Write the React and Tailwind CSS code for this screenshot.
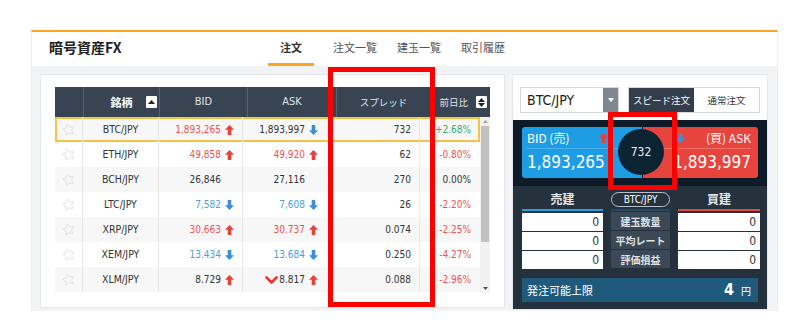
import React from 'react';
import { Star } from 'lucide-react';

const NUM = "[font-family:'DejaVu_Sans_Condensed','DejaVu_Sans','Noto_Sans_CJK_JP',sans-serif]";
const JP = "[font-family:'Noto_Sans_CJK_JP',sans-serif]";

const colorOf = {
  red: 'text-[#ef5350]',
  blue: 'text-[#4a9ee0]',
  green: 'text-[#3aa76d]',
  dark: 'text-[#333333]',
};

const rows = [
  { sym: 'BTC/JPY', bid: '1,893,265', bidC: 'red', bidA: 'up', ask: '1,893,997', askC: 'dark', askA: 'down', spread: '732', chg: '+2.68%', chgC: 'green' },
  { sym: 'ETH/JPY', bid: '49,858', bidC: 'red', bidA: 'up', ask: '49,920', askC: 'red', askA: 'up', spread: '62', chg: '-0.80%', chgC: 'red' },
  { sym: 'BCH/JPY', bid: '26,846', bidC: 'dark', bidA: null, ask: '27,116', askC: 'dark', askA: null, spread: '270', chg: '0.00%', chgC: 'dark' },
  { sym: 'LTC/JPY', bid: '7,582', bidC: 'blue', bidA: 'down', ask: '7,608', askC: 'blue', askA: 'down', spread: '26', chg: '-2.20%', chgC: 'red' },
  { sym: 'XRP/JPY', bid: '30.663', bidC: 'red', bidA: 'up', ask: '30.737', askC: 'red', askA: 'up', spread: '0.074', chg: '-2.25%', chgC: 'red' },
  { sym: 'XEM/JPY', bid: '13.434', bidC: 'blue', bidA: 'down', ask: '13.684', askC: 'blue', askA: 'down', spread: '0.250', chg: '-4.27%', chgC: 'red' },
  { sym: 'XLM/JPY', bid: '8.729', bidC: 'dark', bidA: 'up', ask: '8.817', askC: 'dark', askA: 'up', spread: '0.088', chg: '-2.96%', chgC: 'red', chevron: true },
];

function Arrow({ dir }) {
  if (!dir) return <span className="w-[9px]" />;
  const up = dir === 'up';
  return (
    <svg width="9" height="10" viewBox="0 0 9 10" className={up ? 'text-[#e8403a]' : 'text-[#3b8fd9]'}>
      {up ? (
        <path d="M4.5 0 9 4.8H6.3V10H2.7V4.8H0Z" fill="currentColor" />
      ) : (
        <path d="M4.5 10 9 5.2H6.3V0H2.7V5.2H0Z" fill="currentColor" />
      )}
    </svg>
  );
}

function SortIcon({ both }) {
  return (
    <span className="w-[11px] h-[12px] bg-white rounded-[1px] flex flex-col items-center justify-center gap-[1px]">
      <svg width="7" height="4" viewBox="0 0 7 4"><path d="M3.5 0 7 4H0Z" fill="#222" /></svg>
      {both && <svg width="7" height="4" viewBox="0 0 7 4"><path d="M3.5 4 7 0H0Z" fill="#222" /></svg>}
    </span>
  );
}

function Table() {
  return (
    <div className="w-[435px]">
      {/* header */}
      <div className={`grid grid-cols-[29px_76px_88px_89px_94px_59px] h-[30px] bg-[#394453] text-[#dfe4ea] text-[11px] ${NUM}`}>
        <div className="border-r border-[#56606e]" />
        <div className="relative flex items-center justify-center border-r border-[#56606e]">
          <span className={`font-bold text-white text-[11px] ${JP}`}>銘柄</span>
          <span className="absolute right-[2px] top-[9px]"><SortIcon /></span>
        </div>
        <div className="flex items-center justify-center border-r border-[#56606e]">BID</div>
        <div className="flex items-center justify-center border-r border-[#56606e]">ASK</div>
        <div className={`flex items-center justify-center border-r border-[#56606e] text-[9.5px] ${JP}`}>スプレッド</div>
        <div className={`flex items-center justify-end gap-[8px] pr-[3px] text-[9.5px] ${JP}`}>
          前日比
          <SortIcon both />
        </div>
      </div>
      {/* body */}
      <div className="flex h-[176px]">
        <div className={`w-[425px] ${NUM} text-[10px]`}>
          {rows.map((r, i) => (
            <div
              key={r.sym}
              className={`grid grid-cols-[28px_76px_84px_87px_90px_60px] h-[25px] ${i % 2 === 0 ? 'bg-[#f7f7f7]' : 'bg-white'} ${i === 0 ? 'shadow-[inset_0_0_0_2px_#f6c445]' : ''}`}
            >
              <div className="flex items-center justify-center border-r border-[#e8e8e8]">
                <Star size={13} strokeWidth={1.4} className="text-[#dcdcdc] -rotate-12" />
              </div>
              <div className="flex items-center justify-center border-r border-[#e8e8e8] text-[#333] text-[10.5px]">{r.sym}</div>
              <div className="flex items-center justify-end gap-[4px] pr-[8px] border-r border-[#e8e8e8]">
                <span className={colorOf[r.bidC]}>{r.bid}</span>
                <Arrow dir={r.bidA} />
              </div>
              <div className="flex items-center justify-end gap-[4px] pr-[11px] border-r border-[#e8e8e8]">
                {r.chevron && (
                  <svg width="13" height="8" viewBox="0 0 13 8" className="mr-[-3px]">
                    <path d="M1.5 1.5 6.5 6.5 11.5 1.5" stroke="#e53935" strokeWidth="2.6" fill="none" strokeLinecap="round" strokeLinejoin="round" />
                  </svg>
                )}
                <span className={colorOf[r.askC]}>{r.ask}</span>
                <Arrow dir={r.askA} />
              </div>
              <div className="flex items-center justify-end pr-[8px] border-r border-[#e8e8e8] text-[#333]">{r.spread}</div>
              <div className={`flex items-center justify-end pr-[9px] ${colorOf[r.chgC]}`}>{r.chg}</div>
            </div>
          ))}
        </div>
        {/* scrollbar */}
        <div className="w-[10px] bg-[#f1f1f1] flex flex-col items-center">
          <div className="h-[9px] flex items-center justify-center">
            <svg width="5" height="3" viewBox="0 0 5 3"><path d="M2.5 0 5 3H0Z" fill="#a3a3a3" /></svg>
          </div>
          <div className="w-[8px] h-[116px] bg-[#c1c1c1]" />
          <div className="flex-1" />
          <div className="h-[9px] flex items-center justify-center">
            <svg width="5" height="3" viewBox="0 0 5 3"><path d="M2.5 3 5 0H0Z" fill="#505050" /></svg>
          </div>
        </div>
      </div>
    </div>
  );
}

function OrderPanel() {
  const pos = ['建玉数量', '平均レート', '評価損益'];
  return (
    <div className="w-[256px] h-[236px] bg-white border border-[#e6e7ea] flex flex-col">
      <div className="flex h-[26px] mt-[12px] mx-[7px] mb-[7px]">
        <div className="w-[100px] flex border border-[#d5d7da] bg-white">
          <span className={`flex-1 pl-[6px] flex items-center text-[14px] text-[#222] ${NUM}`}>BTC/JPY</span>
          <span className="w-[15px] bg-[#7f8892] flex items-center justify-center">
            <svg width="6" height="4" viewBox="0 0 6 4"><path d="M0 0H6L3 4Z" fill="#fff" /></svg>
          </span>
        </div>
        <div className={`ml-[9px] flex border border-[#d5d7da] ${JP}`}>
          <span className="w-[65px] bg-[#323e4c] text-white text-[9.5px] flex items-center justify-center">スピード注文</span>
          <span className="w-[65px] bg-white text-[#333] text-[9.5px] flex items-center justify-center">通常注文</span>
        </div>
      </div>

      {/* price boxes */}
      <div className="bg-[#0c1b27] px-[9px] pt-[7px] pb-[8px]">
        <div className="relative flex h-[51px] text-white">
          <div className="w-[120px] rounded-l-[3px] bg-[#1f9de4] pl-[5px]">
            <div className="h-[22px] flex items-center border-b border-[#4cb2ec] pr-[34px]">
              <span className={`flex-1 text-[12px] ${JP}`}>BID (売)</span>
              <Arrow dir="up" />
            </div>
            <div className={`text-[17px] leading-[26px] ${NUM}`}>1,893,265</div>
          </div>
          <div className="w-px bg-[#0c1b27]" />
          <div className="flex-1 rounded-r-[3px] bg-[#e8443e] pr-[7px] text-right">
            <div className="h-[22px] flex items-center border-b border-[#ee6d68] pl-[33px]">
              <Arrow dir="down" />
              <span className={`flex-1 text-[12px] ${JP}`}>(買) ASK</span>
            </div>
            <div className={`text-[17px] leading-[26px] ${NUM}`}>1,893,997</div>
          </div>
          <div className={`absolute left-[96px] top-[2px] w-[46px] h-[46px] rounded-full bg-[#0c2334] flex items-center justify-center text-[12px] text-[#e8edf2] ${NUM}`}>
            732
          </div>
        </div>
      </div>

      {/* positions */}
      <div className="flex-1 bg-[#25313d] px-[9px] pt-[3px]">
        <div className={`grid grid-cols-[81px_59px_82px] gap-x-[8px] ${JP}`}>
          <div className="h-[20px] flex items-center justify-center text-[12px] font-bold text-[#e4e8ec]">売建</div>
          <div className="h-[20px] flex items-center">
            <span className={`w-full h-[15px] rounded-full border border-[#b9c0c7] flex items-center justify-center text-[10px] text-white ${NUM}`}>BTC/JPY</span>
          </div>
          <div className="h-[20px] flex items-center justify-center text-[12px] font-bold text-[#e4e8ec]">買建</div>

          <div className="border-t-2 border-[#2b9be0] pt-[2px] flex flex-col gap-[1px]">
            {pos.map((p) => (
              <div key={p} className={`h-[18px] bg-white flex items-center justify-end pr-[4px] text-[12px] text-[#333] ${NUM}`}>0</div>
            ))}
          </div>
          <div className="border-t-2 border-[#1d4a68] pt-[1px] flex flex-col gap-[1px]">
            {pos.map((p) => (
              <div key={p} className="h-[18px] bg-[#3b4855] flex items-center justify-center text-[10px] font-bold text-[#dfe3e7]">{p}</div>
            ))}
          </div>
          <div className="border-t-2 border-[#e34a44] pt-[2px] flex flex-col gap-[1px]">
            {pos.map((p) => (
              <div key={p} className={`h-[18px] bg-white flex items-center justify-end pr-[4px] text-[12px] text-[#333] ${NUM}`}>0</div>
            ))}
          </div>
        </div>
        <div className="mt-[9px] h-[24px] bg-[#1f5a7c] flex items-center pl-[5px] pr-[7px] text-white">
          <span className={`flex-1 text-[11px] ${JP}`}>発注可能上限</span>
          <span className={`text-[16px] font-bold ${NUM}`}>4</span>
          <span className={`ml-[7px] text-[10px] ${JP}`}>円</span>
        </div>
      </div>
    </div>
  );
}

export default function App() {
  const tabs = ['注文', '注文一覧', '建玉一覧', '取引履歴'];
  return (
    <div className="relative w-[800px] h-[330px] bg-white overflow-hidden">
      <div className="ml-[31px] mt-[30px] w-[747px] border-t-2 border-[#f6a623] border-x border-x-[#ececec]">
        {/* Header */}
        <div className={`h-[34px] flex bg-white ${JP}`}>
          <div className="w-[227px] pl-[17px] flex items-center text-[14px] font-bold text-[#222] pb-[3px]">暗号資産FX</div>
          {tabs.map((t, i) => (
            <div key={t} className="w-[64px] flex flex-col items-center">
              <div className={`flex-1 flex items-center text-[11px] ${i === 0 ? 'font-bold text-[#333]' : 'text-[#555]'}`}>{t}</div>
              <div className={`w-[46px] h-[3px] ${i === 0 ? 'bg-[#f6a623]' : ''}`} />
            </div>
          ))}
        </div>

        {/* Body */}
        <div className="h-[245px] bg-[#f2f3f5] flex gap-[7px] pl-[8px] pt-[8px]">
          <div className="w-[465px] h-[234px] bg-white border border-[#e6e7ea] pl-[14px] pt-[12px]">
            <Table />
          </div>
          <OrderPanel />
        </div>
      </div>

      {/* annotation boxes */}
      <div className="absolute left-[328px] top-[67px] w-[107px] h-[240px] border-[5px] border-[#ff0000]" />
      <div className="absolute left-[608px] top-[112px] w-[69px] h-[78px] border-[5px] border-[#ff0000]" />
    </div>
  );
}
